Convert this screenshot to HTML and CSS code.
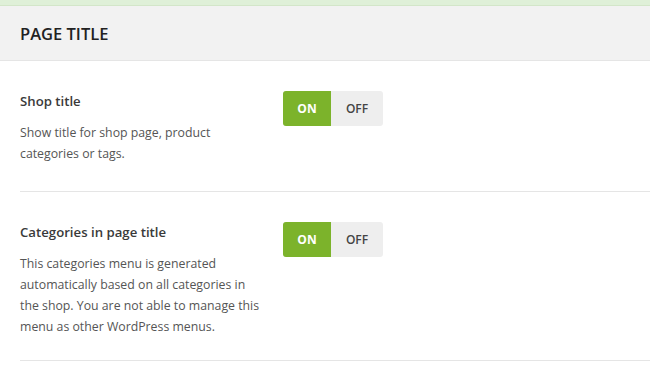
FILE: index.html
```html
<!DOCTYPE html>
<html lang="en">
<head>
  <meta charset="UTF-8" />
  <title>Page title options</title>
  <link rel="stylesheet" href="styles.css">
</head>
<body>
  <div class="notice-strip"></div>
  <div class="section-header">
    <h2>PAGE TITLE</h2>
  </div>
  <div class="options">
    <div class="option-row">
      <div class="option-info">
        <h4>Shop title</h4>
        <p>Show title for shop page, product categories or tags.</p>
      </div>
      <div class="switch">
        <span class="switch-on active">ON</span>
        <span class="switch-off">OFF</span>
      </div>
    </div>
    <div class="option-row">
      <div class="option-info">
        <h4>Categories in page title</h4>
        <p>This categories menu is generated automatically based on all categories in the shop. You are not able to manage this menu as other WordPress menus.</p>
      </div>
      <div class="switch">
        <span class="switch-on active">ON</span>
        <span class="switch-off">OFF</span>
      </div>
    </div>
  </div>
</body>
</html>
```

FILE: styles.css
```css
* {
  margin: 0;
  padding: 0;
  box-sizing: border-box;
}

html, body {
  height: 100%;
  overflow: hidden;
  background: #fff;
  font-family: 'Open Sans', 'Noto Sans', sans-serif;
  color: #333;
}

.notice-strip {
  height: 6px;
  background: #dff0d8;
  border-bottom: 1px solid #d3e6c9;
}

.section-header {
  background: #f2f2f2;
  border-bottom: 1px solid #e5e5e5;
  height: 55px;
  display: flex;
  align-items: center;
  padding: 0 20px;
}

.section-header h2 {
  font-size: 16.5px;
  font-weight: 600;
  color: #222;
  margin-top: 1px;
}

.options {
  padding-left: 20px;
}

.option-row {
  display: flex;
  align-items: flex-start;
  border-bottom: 1px solid #e5e5e5;
  padding: 30px 0 27px;
}

.option-row:last-child {
  padding-bottom: 23px;
}

.option-info {
  width: 243px;
  margin-right: 20px;
}

.option-info h4 {
  font-size: 13.2px;
  font-weight: 600;
  color: #3a3a3a;
  line-height: 20px;
  margin-bottom: 11px;
}

.option-info p {
  font-size: 12.3px;
  line-height: 21px;
  color: #555;
}

.switch {
  display: flex;
  height: 35px;
  border-radius: 3px;
  overflow: hidden;
  background: #eee;
  font-size: 12px;
  font-weight: 600;
}

.switch span {
  display: flex;
  align-items: center;
  justify-content: center;
  color: #444;
}

.switch-on {
  width: 48px;
}

.switch-off {
  width: 52px;
}

.switch-on.active {
  background: #7cb32b;
  color: #fff;
  font-weight: 700;
}
```
